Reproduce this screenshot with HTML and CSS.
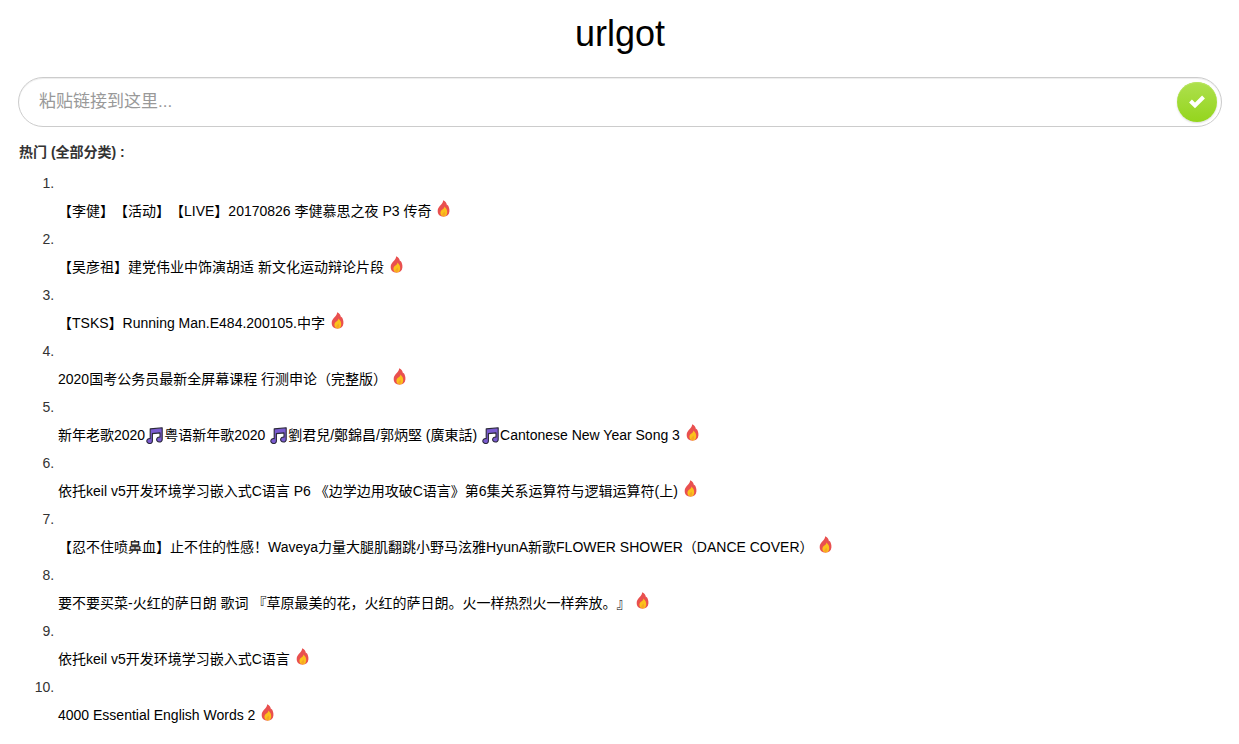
FILE: index.html
```html
<!DOCTYPE html>
<html lang="zh-CN">

<head>
    <meta charset="UTF-8">
    <meta name="viewport" content="width=device-width, initial-scale=1.0">
    <title>urlgot</title>
    <link rel="stylesheet" href="styles.css">
</head>

<body>
    <!-- Shared icons -->
    <svg class="sprite" aria-hidden="true">
        <symbol id="fire" viewBox="0 0 13 17">
            <path fill="#e9504f" d="M6.2 .2C8.8 1.6 9.8 3.4 10 5.4L10.6 4.8C12 6.8 12.6 9 12.4 11.4C12.1 14.8 10 16.6 6.6 16.6C3 16.6 .8 14.6 .7 11.2C.6 8.8 1.6 7.4 3 5.8C4.8 4 5.9 2.6 6.2 .2Z"/>
            <path fill="#fbc21c" d="M7.4 6.4C9.4 8.2 10.4 10.2 10.2 12.4C10 15 8.8 16.4 6.8 16.4C4.6 16.4 3.4 15 3.4 12.8C3.4 11 4.4 10.2 5.4 9.4C6.6 8.6 7.4 7.8 7.4 6.4Z"/>
            <path fill="#f6a823" d="M7.2 11.4C8.2 12.6 8.4 13.4 8.2 14.6C8 15.8 7.4 16.4 6.6 16.4C5.6 16.4 5 15.6 5.1 14.6C5.2 13.4 6.6 12.8 7.2 11.4Z"/>
        </symbol>
        <symbol id="music" viewBox="0 0 17 17">
            <path fill="#7a5bd0" stroke="#2a2838" stroke-width="1.1" stroke-linejoin="round" d="M4.2 1.9L16.2 .8V12.4A2.8 2.5 0 1 1 14 10.1V5.9L6.4 6.6V13.9A2.8 2.5 0 1 1 4.2 11.6Z"/>
        </symbol>
    </svg>

    <h1>urlgot</h1>

    <form id="urlForm">
        <input type="text" id="url" name="url" placeholder="粘贴链接到这里..." aria-label="粘贴链接到这里">
        <button type="submit" aria-label="提交">
            <svg width="18" height="14" viewBox="0 0 18 14"><path d="M2.5 6L7 10.5L15.5 2" fill="none" stroke="#fff" stroke-width="4"/></svg>
        </button>
    </form>

    <h2>热门 (全部分类) :</h2>

    <ol id="hotList">
        <li><br><a href="#">【李健】【活动】【LIVE】20170826 李健慕思之夜 P3 传奇</a> <svg class="fire"><use href="#fire"/></svg></li>
        <li><br><a href="#">【吴彦祖】建党伟业中饰演胡适 新文化运动辩论片段</a> <svg class="fire"><use href="#fire"/></svg></li>
        <li><br><a href="#">【TSKS】Running Man.E484.200105.中字</a> <svg class="fire"><use href="#fire"/></svg></li>
        <li><br><a href="#">2020国考公务员最新全屏幕课程 行测申论（完整版）</a> <svg class="fire"><use href="#fire"/></svg></li>
        <li><br><a href="#">新年老歌2020<svg class="music"><use href="#music"/></svg>粤语新年歌2020 <svg class="music"><use href="#music"/></svg>劉君兒/鄭錦昌/郭炳堅 (廣東話) <svg class="music"><use href="#music"/></svg>Cantonese New Year Song 3</a> <svg class="fire"><use href="#fire"/></svg></li>
        <li><br><a href="#">依托keil v5开发环境学习嵌入式C语言 P6 《边学边用攻破C语言》第6集关系运算符与逻辑运算符(上)</a> <svg class="fire"><use href="#fire"/></svg></li>
        <li><br><a href="#">【忍不住喷鼻血】止不住的性感！Waveya力量大腿肌翻跳小野马泫雅HyunA新歌FLOWER SHOWER（DANCE COVER）</a> <svg class="fire"><use href="#fire"/></svg></li>
        <li><br><a href="#">要不要买菜-火红的萨日朗 歌词 『草原最美的花，火红的萨日朗。火一样热烈火一样奔放。』</a> <svg class="fire"><use href="#fire"/></svg></li>
        <li><br><a href="#">依托keil v5开发环境学习嵌入式C语言</a> <svg class="fire"><use href="#fire"/></svg></li>
        <li><br><a href="#">4000 Essential English Words 2</a> <svg class="fire"><use href="#fire"/></svg></li>
    </ol>
</body>

</html>
```
FILE: styles.css
```css
* {
    box-sizing: border-box;
}

body {
    margin: 0;
    padding: 14px 17px 0 18px;
    font-family: "Liberation Sans", Arial, "Noto Sans CJK SC", sans-serif;
    font-size: 14px;
    line-height: 20px;
    color: #333;
    background-color: #fff;
    text-spacing-trim: space-all;
}

.sprite {
    position: absolute;
    width: 0;
    height: 0;
}

h1 {
    margin: 0 0 23px;
    font-size: 36px;
    font-weight: normal;
    line-height: 40px;
    text-align: center;
    color: #000;
}

#urlForm {
    display: flex;
    align-items: center;
    height: 50px;
    padding: 0 4px 0 20px;
    border: 1px solid #ccc;
    border-radius: 25px;
    box-shadow: inset 0 1px 1px rgba(0, 0, 0, 0.075);
}

#urlForm input {
    flex: 1;
    min-width: 0;
    padding: 0;
    border: none;
    outline: none;
    background: transparent;
    font-family: inherit;
    font-size: 17px;
    color: #555;
}

#urlForm input::placeholder {
    color: #999;
}

#urlForm button {
    display: flex;
    align-items: center;
    justify-content: center;
    width: 40px;
    height: 40px;
    padding: 0 1px 1px 0;
    border: none;
    border-radius: 50%;
    background: linear-gradient(#aee04e, #94d51d);
    box-shadow: 0 1px 2px rgba(0, 0, 0, 0.15), inset 0 1px 0 #b8e561;
    cursor: pointer;
}

#urlForm button svg {
    flex: none;
}

h2 {
    margin: 15px 0 7px;
    padding-left: 1px;
    font-size: 14px;
    font-weight: bold;
    line-height: 20px;
}

#hotList {
    margin: 0;
    padding-left: 40px;
    line-height: 28px;
}

#hotList a {
    color: #000;
    text-decoration: none;
}

#hotList a:hover {
    text-decoration: underline;
}

.fire {
    width: 13px;
    height: 17px;
    margin: -2px 0 0 2px;
    vertical-align: -1px;
}

.music {
    width: 17px;
    height: 17px;
    margin: 0 1px;
    vertical-align: -4px;
}
```
